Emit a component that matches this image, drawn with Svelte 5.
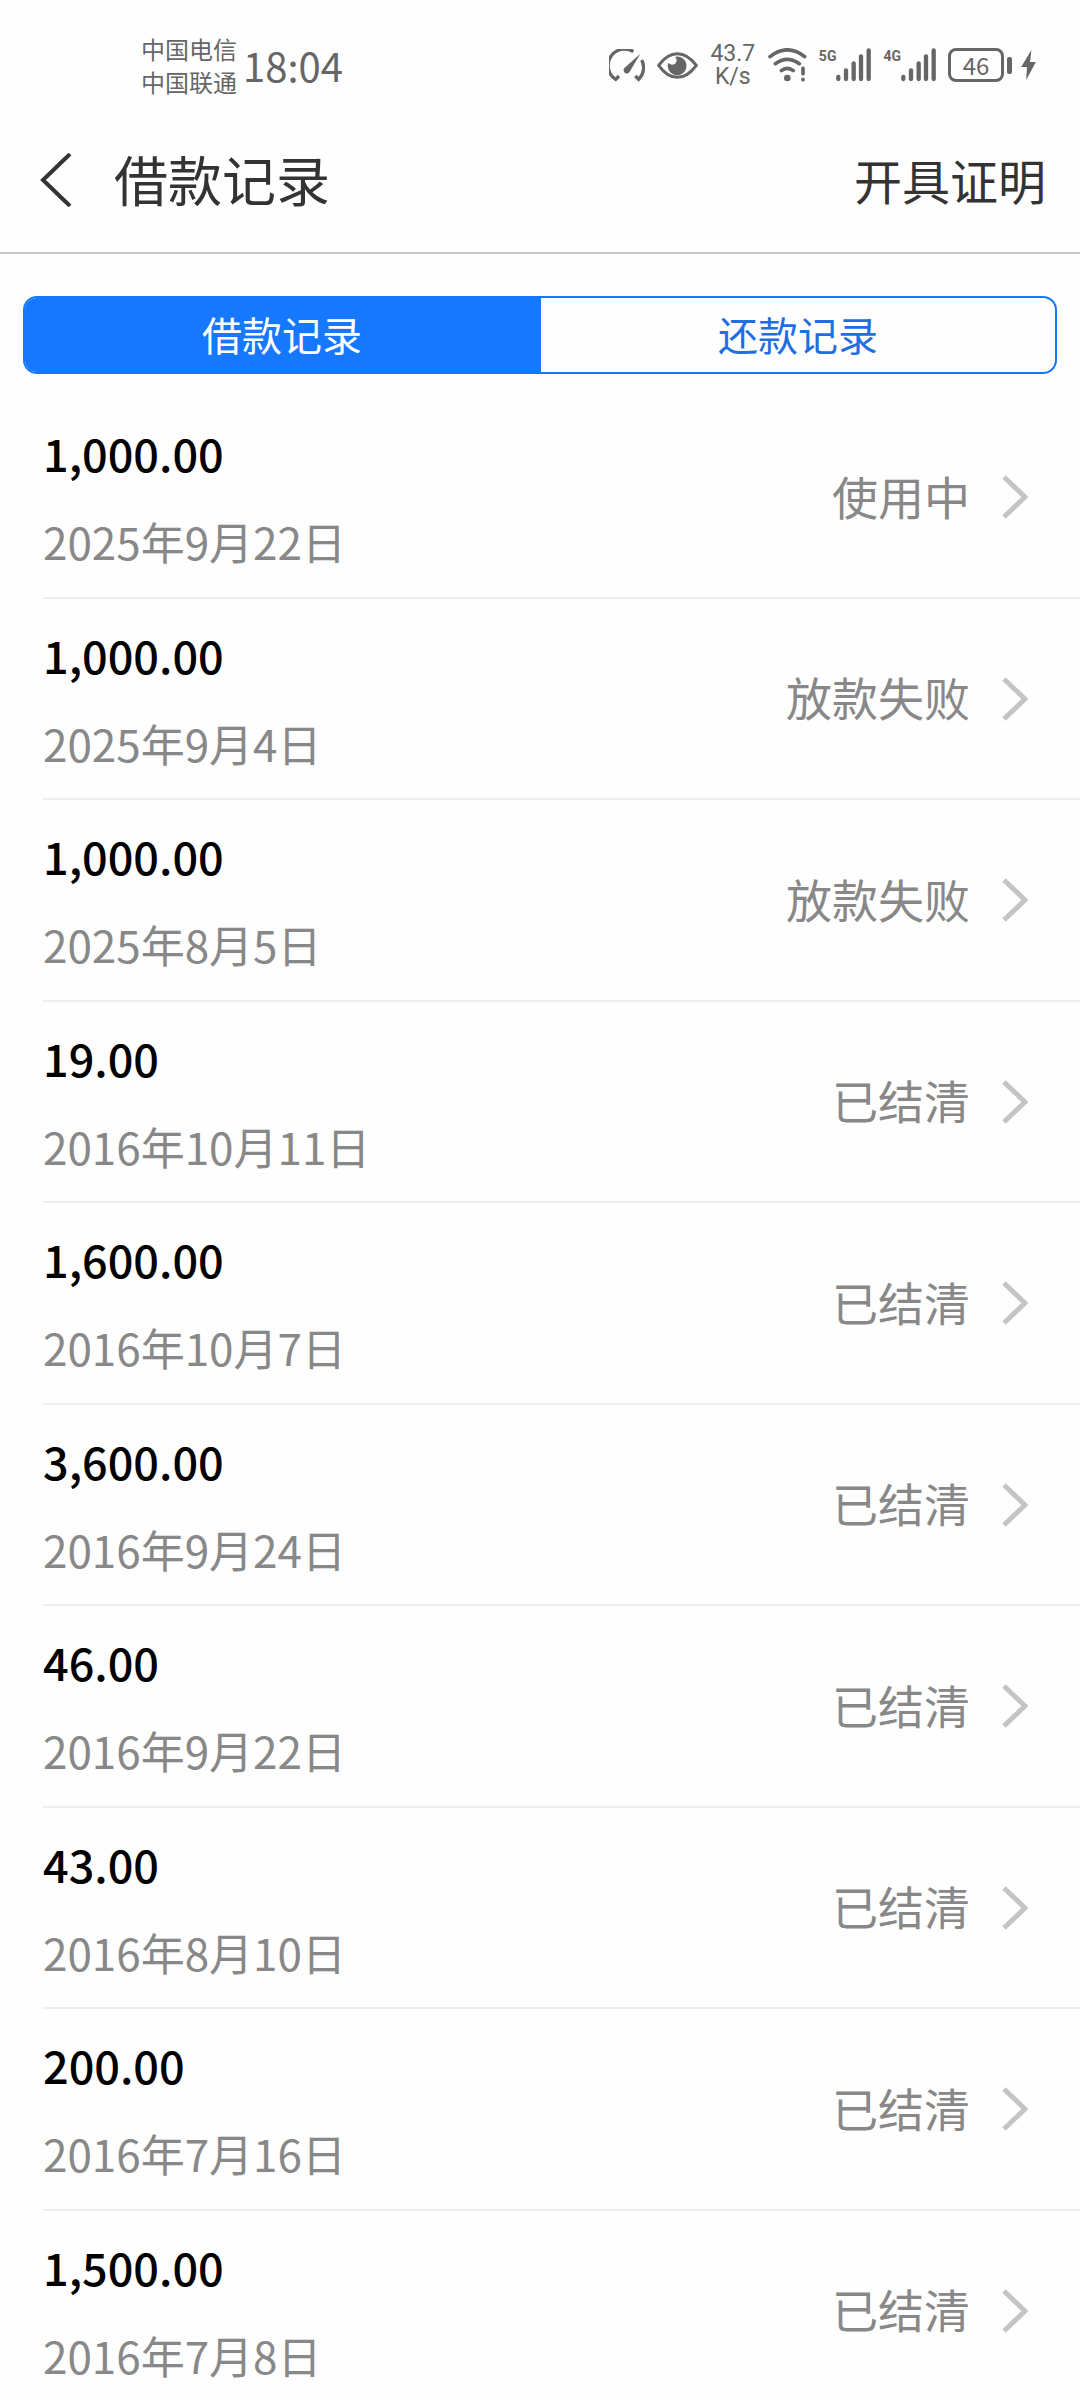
<script lang="ts">
	let activeTab = "borrow"

	const tabs = [
		{ id: "borrow", label: "借款记录" },
		{ id: "repay", label: "还款记录" },
	]

	const records = [
		{ amount: "1,000.00", date: "2025年9月22日", status: "使用中" },
		{ amount: "1,000.00", date: "2025年9月4日", status: "放款失败" },
		{ amount: "1,000.00", date: "2025年8月5日", status: "放款失败" },
		{ amount: "19.00", date: "2016年10月11日", status: "已结清" },
		{ amount: "1,600.00", date: "2016年10月7日", status: "已结清" },
		{ amount: "3,600.00", date: "2016年9月24日", status: "已结清" },
		{ amount: "46.00", date: "2016年9月22日", status: "已结清" },
		{ amount: "43.00", date: "2016年8月10日", status: "已结清" },
		{ amount: "200.00", date: "2016年7月16日", status: "已结清" },
		{ amount: "1,500.00", date: "2016年7月8日", status: "已结清" },
	]
</script>

<div class="screen">
	<div class="status-bar">
		<div class="carriers">
			<span>中国电信</span>
			<span>中国联通</span>
		</div>
		<time>18:04</time>

		<div class="indicators">
			<svg class="gauge" viewBox="48 57 108 99" fill="none" stroke="currentColor" stroke-width="10">
				<path d="M121 65A49 49 0 0 0 68 148L78 138" />
				<path d="M146 90A49 49 0 0 1 137 148L127 138" />
				<path d="M142 71L111 124A10 10 0 1 1 95 113Z" fill="currentColor" stroke="none" />
			</svg>
			<svg class="eye" viewBox="192 66 123 81">
				<path
					d="M197 106Q222 71 253 71T310 106Q284 142 253 142T197 106Z"
					fill="none"
					stroke="currentColor"
					stroke-width="9"
				/>
				<path d="M247 80A28 28 0 1 1 226 98Q236 109 246 101Q255 93 247 80Z" fill="currentColor" />
			</svg>
			<div class="speed">
				<span>43.7</span>
				<span>K/s</span>
			</div>
			<svg class="wifi" viewBox="535 53 117 102" fill="none" stroke="currentColor" stroke-width="11" stroke-linecap="round">
				<path d="M541 79Q593 38 645 79" />
				<path d="M557 100Q593 74 629 100" />
				<path d="M575 121Q593 107 611 121" />
				<circle cx="593" cy="143" r="10" fill="currentColor" stroke="none" />
				<path d="M640 114V130M640 147V148" />
			</svg>
			{#each ["5G", "4G"] as network}
				<div class="signal">
					<span>{network}</span>
					<svg viewBox="75 53 105 102" stroke="currentColor" stroke-width="13" stroke-linecap="round">
						<path d="M82 140V146M105 120V146M128 99V146M150 78V146M173 60V146" />
					</svg>
				</div>
			{/each}
			<div class="battery">
				<span>46</span>
			</div>
			<svg class="bolt" viewBox="631 63 43 88" fill="currentColor">
				<path d="M661 63L631 113H648L646 151L674 98H657Z" />
			</svg>
		</div>
	</div>

	<header>
		<button class="back" aria-label="返回">
			<svg viewBox="0 0 32 54" fill="none" stroke="currentColor" stroke-width="4">
				<path d="M30 1L3 27L30 53" />
			</svg>
		</button>
		<h1>借款记录</h1>
		<button class="certificate">开具证明</button>
	</header>

	<div class="tabs" role="tablist">
		{#each tabs as tab}
			<button
				role="tab"
				aria-selected={activeTab === tab.id}
				class:active={activeTab === tab.id}
				on:click={() => (activeTab = tab.id)}
			>
				{tab.label}
			</button>
		{/each}
	</div>

	<ul class="records">
		{#each records as record}
			<li>
				<a href="#detail">
					<div class="info">
						<span class="amount">{record.amount}</span>
						<span class="date">{record.date}</span>
					</div>
					<span class="state">{record.status}</span>
					<svg class="arrow" viewBox="0 0 26 44" fill="none" stroke="currentColor" stroke-width="5">
						<path d="M2 2L23 22L2 42" />
					</svg>
				</a>
			</li>
		{/each}
	</ul>
</div>

<style>
	:global(body) {
		margin: 0;
		background-color: #fefefe;
	}

	.screen {
		display: flex;
		flex-direction: column;
		height: 100vh;
		overflow: hidden;
		color: #333;
		font-family: "Noto Sans CJK SC", "Noto Sans", sans-serif;
	}

	button {
		padding: 0;
		border: 0;
		background: none;
		color: inherit;
		font-family: inherit;
		cursor: pointer;
	}

	svg {
		display: block;
		flex: none;
	}

	.status-bar {
		display: flex;
		align-items: center;
		flex: none;
		height: 108px;
		padding: 22px 44px 0 141px;
		box-sizing: border-box;
		color: #666;
	}

	.status-bar span {
		display: block;
	}

	.carriers {
		font-size: 24px;
		line-height: 33px;
	}

	time {
		margin-left: 6px;
		font-size: 40px;
		line-height: 48px;
	}

	.indicators {
		display: flex;
		align-items: center;
		gap: 12px;
		margin-left: auto;
	}

	.gauge {
		width: 36px;
		height: 33px;
	}

	.eye {
		width: 41px;
		height: 27px;
	}

	.speed {
		width: 46px;
		font-family: Roboto, sans-serif;
		font-size: 23px;
		line-height: 23px;
		text-align: center;
	}

	.wifi {
		width: 39px;
		height: 34px;
	}

	.signal {
		display: flex;
		align-items: flex-start;

		span {
			font-family: Roboto, sans-serif;
			font-size: 14px;
			font-weight: 700;
			line-height: 16px;
		}

		svg {
			width: 35px;
			height: 34px;
		}
	}

	.battery {
		display: flex;
		align-items: center;
		gap: 3px;

		span {
			width: 56px;
			height: 34px;
			box-sizing: border-box;
			border: 3px solid currentColor;
			border-radius: 8px;
			font-size: 24px;
			line-height: 27px;
			text-align: center;
		}

		&::after {
			content: "";
			width: 5px;
			height: 17px;
			border-radius: 2px;
			background-color: currentColor;
		}
	}

	.bolt {
		width: 15px;
		height: 30px;
		margin-left: -3px;
	}

	header {
		display: flex;
		align-items: center;
		flex: none;
		height: 146px;
		padding: 0 34px 0 40px;
		box-sizing: border-box;
		border-bottom: 2px solid #c8c8c8;
	}

	.back svg {
		width: 32px;
		height: 54px;
	}

	h1 {
		margin: 0 auto 0 42px;
		padding-bottom: 3px;
		font-size: 54px;
		font-weight: 400;
		line-height: 72px;
	}

	.certificate {
		padding-bottom: 3px;
		font-size: 48px;
		line-height: 64px;
	}

	.tabs {
		display: flex;
		flex: none;
		height: 78px;
		margin: 42px 23px 23px;
		box-sizing: border-box;
		border: 2px solid #1677ff;
		border-radius: 14px;
		overflow: hidden;

		button {
			flex: 1;
			padding-bottom: 3px;
			color: #1f6fe0;
			font-size: 40px;
			line-height: 56px;
		}

		button:first-child {
			border-right: 2px solid #1677ff;
		}

		.active {
			background-color: #1677ff;
			color: #fff;
		}
	}

	.records {
		flex: 1;
		min-height: 0;
		margin: 0;
		padding: 0 0 0 43px;
		list-style: none;
		overflow-y: auto;
		scrollbar-width: none;
	}

	.records li {
		height: 202px;
		box-sizing: border-box;
		border-bottom: 2px solid #eee;

		&:nth-child(even) {
			height: 201px;
		}
	}

	.records a {
		display: flex;
		align-items: center;
		height: 100%;
		padding-right: 52px;
		color: #888;
		text-decoration: none;
	}

	.info {
		display: flex;
		flex-direction: column;
		gap: 24px;
		margin-right: auto;
	}

	.amount {
		color: #000;
		font-size: 45px;
		font-weight: 500;
		line-height: 64px;
	}

	.date {
		font-size: 44px;
		line-height: 64px;
	}

	.state {
		padding-bottom: 5px;
		font-size: 46px;
		line-height: 64px;
	}

	.arrow {
		width: 26px;
		height: 44px;
		margin-left: 32px;
		color: #c4c4c4;
	}
</style>
